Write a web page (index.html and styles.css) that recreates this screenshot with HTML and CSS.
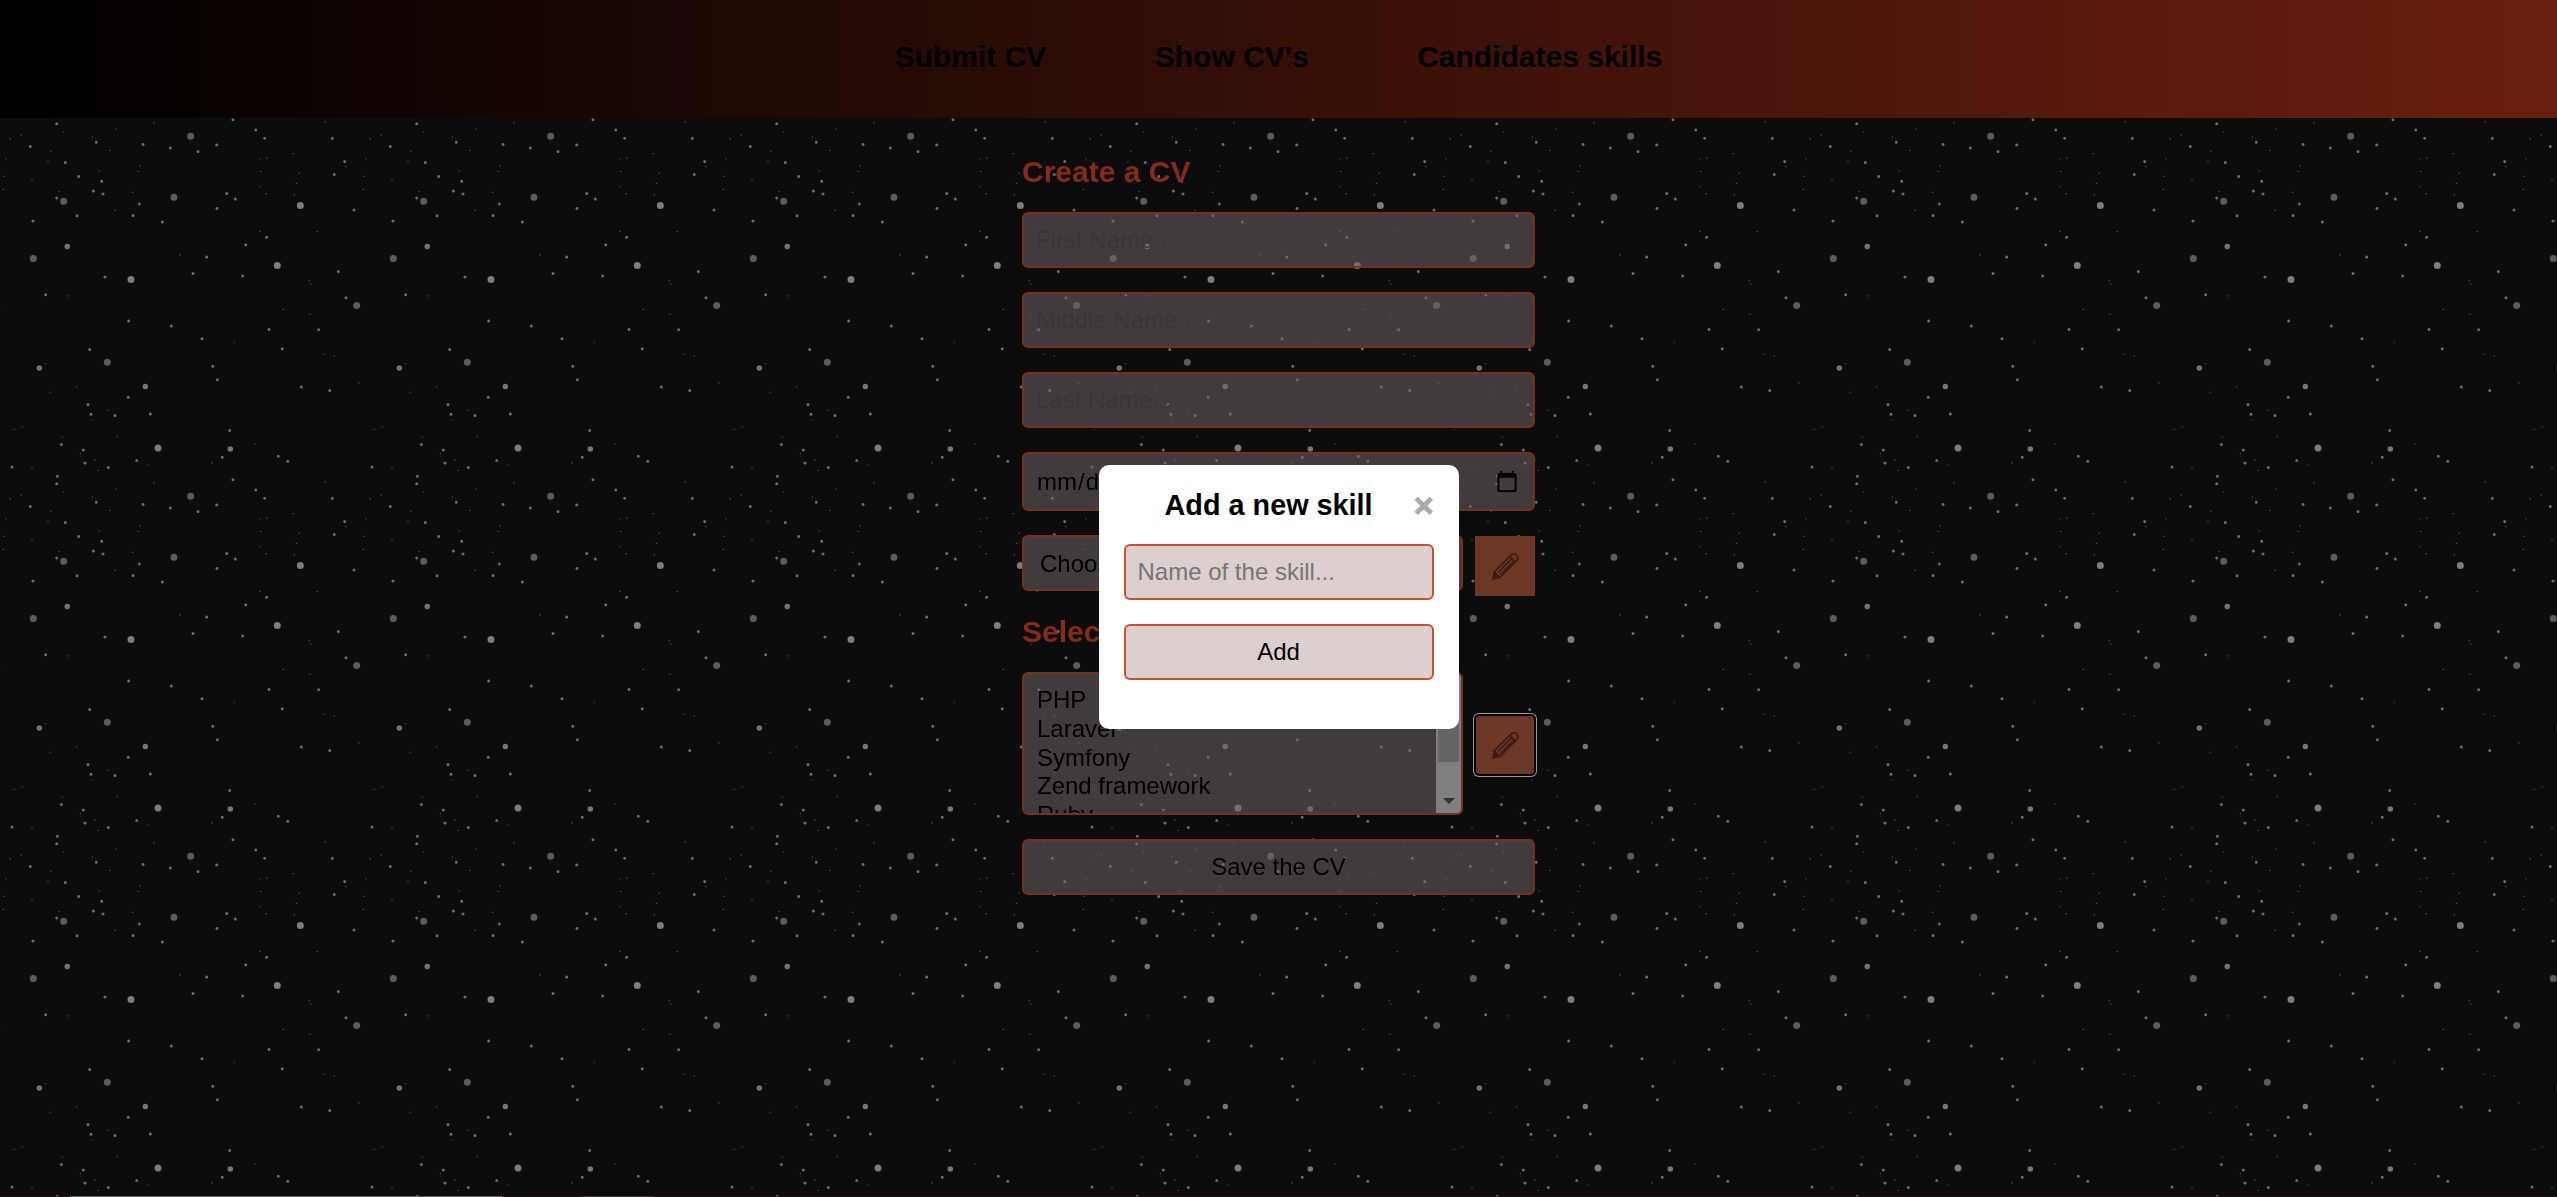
FILE: index.html
```html
<!DOCTYPE html>
<html lang="en">
<head>
  <meta charset="UTF-8">
  <meta name="viewport" content="width=device-width, initial-scale=1.0" />
  <title>Create a CV</title>
  <link rel="stylesheet" href="styles.css">
</head>
<body>
  <svg class="stars" aria-hidden="true">
    <defs>
      <pattern id="star-tile" patternUnits="userSpaceOnUse" x="0" y="118" width="360" height="360">
        <path class="star-big-dim" d="M190.7 18.2h0M63.7 83.2h0M174 79.3h0M33.3 140.4h0M107.3 244.3h0M356.7 187.5h0M-3.3 187.5h0"/>
        <path class="star-big" d="M300.3 87.5h0M277.3 147.5h0M131 161.4h0M158 330h0"/>
        <path class="star-large" d="M67.3 128.6h0M145.3 268.6h0M39.3 250h0M230.3 331h0"/>
        <path class="star-mid" d="M56.7 5.7h0M255.7 12.1h0M96.3 24.3h0M143 26.4h0M170.3 30h0M198 33.6h0M30.3 28.6h0M344.7 43.6h0M334.3 56.4h0M65.3 44.6h0M78.7 58.4h0M101.7 63.2h0M93.3 72.9h0M103 76h0M56.7 80h0M139.3 86h0M77 97.7h0M133 97.5h0M217 90.4h0M354 92h0M235.3 81h0M226.7 75.4h0M206.7 138.9h0M193 155.4h0M242.7 157.9h0M338.3 153.6h0M346 179.7h0M45.7 176.8h0M105 159h0M171.3 207.9h0M269 211.4h0M318.7 211.8h0M128.7 202.9h0M202 220.7h0M282.3 230.7h0M89.7 231.4h0M212.7 248.2h0M217.3 261.8h0M301.3 268.9h0M329.7 272.5h0M128.3 279.3h0M88 286.6h0M91 296.2h0M115 297.5h0M150.3 296h0M229.7 312.4h0M222.3 339.3h0M278.3 338.2h0M287.7 343.2h0M61.3 326.6h0M83.3 332.1h0M85 345h0M136.7 342.5h0M108.3 349.6h0M12 348.9h0M57.3 358.2h0M162.3 104.1h0M245.7 126.8h0M332.3 20.3h0M264.7 20.3h0M216.7 27.1h0M233 1.8h0M33 102.9h0M266.7 119.3h0"/>
        <path class="star-tiny" d="M154 5h0M116.3 10.9h0M325 3.9h0M10.3 21h0M21.3 17h0M63.3 13.6h0M92.3 18.9h0M6 41.1h0M51 33.2h0M48 43.9h0M109.7 32.5h0M99 52.9h0M4.3 58.2h0M32 61.8h0M3.3 71.4h0M59 73.6h0M140.3 48h0M138.3 53.4h0M132.7 74.3h0M115 92.4h0M260 41.1h0M267 39.9h0M293.3 35.7h0M260.7 53.4h0M299 55.2h0M296.3 65.4h0M260 68.6h0M266.3 75.7h0M294.3 76.8h0M346 48.9h0M260 113.2h0M317.3 113.6h0M179.7 137h0M309.3 163h0M311 166.1h0M68.7 177.9h0M283.3 191.4h0M310 196.4h0M234 224.6h0M323.7 236.1h0M334.3 238.2h0M45.7 245.7h0M76.7 268.9h0M50.3 274.1h0M358.7 265h0M108 291.9h0M92 302.1h0M22.3 308.9h0M14.3 311.4h0M62.3 318.9h0M117.3 318.6h0M255 326.1h0M80.3 335.7h0M95 342h0M211.7 345h0M148 347.1h0M32 349.9h0M98.3 352.4h0"/>
      </pattern>
    </defs>
    <rect width="100%" height="100%" fill="url(#star-tile)"/>
  </svg>

  <header class="topbar">
    <a href="#" class="nav-link">Submit CV</a>
    <a href="#" class="nav-link">Show CV's</a>
    <a href="#" class="nav-link">Candidates skills</a>
  </header>

  <main class="content">
    <form class="cv-form">
      <h2 class="form-title">Create a CV</h2>
      <input class="field" type="text" placeholder="First Name...">
      <input class="field" type="text" placeholder="Middle Name...">
      <input class="field" type="text" placeholder="Last Name...">
      <input class="field" type="date">

      <div class="row">
        <select class="field field-select">
          <option>Choose a city...</option>
        </select>
        <button type="button" class="icon-btn">
          <svg class="pencil" viewBox="0 0 27 27"><use href="#pencil-icon"/></svg>
        </button>
      </div>

      <h2 class="form-title form-title-skills">Select the skills</h2>
      <div class="row row-skills">
        <div class="skill-list">
          <div class="skill-options">
            <div class="skill-option">PHP</div>
            <div class="skill-option">Laravel</div>
            <div class="skill-option">Symfony</div>
            <div class="skill-option">Zend framework</div>
            <div class="skill-option">Ruby</div>
          </div>
          <div class="scrollbar">
            <div class="scroll-thumb"></div>
            <div class="scroll-arrow"></div>
          </div>
        </div>
        <button type="button" class="icon-btn icon-btn-focus">
          <svg class="pencil" viewBox="0 0 27 27">
            <g id="pencil-icon">
              <path class="pencil-line" d="M3 18.5 18.6 2.9c1.6-1.6 3.7-1.5 5.2 0s1.6 3.6 0 5.2L8.3 23.8 3 18.5z"/>
              <path class="pencil-line" d="M6.4 19.2 19.6 6M8.6 21.2 21.6 8.2M17.4 4.1l5.5 5.5"/>
              <path class="pencil-tip" d="M.8 26.2 2.6 18l6.1 6.2-7.9 2z"/>
            </g>
          </svg>
        </button>
      </div>

      <button type="button" class="field field-btn">Save the CV</button>
    </form>
  </main>

  <div class="page-edge">
    <span class="edge-a"></span>
    <span class="edge-b"></span>
    <span class="edge-c"></span>
  </div>

  <div class="overlay">
    <div class="modal">
      <div class="modal-head">
        <h3 class="modal-title">Add a new skill</h3>
        <span class="modal-close">&times;</span>
      </div>
      <input class="field modal-field" type="text" placeholder="Name of the skill...">
      <button type="button" class="field field-btn">Add</button>
    </div>
  </div>
</body>
</html>
```

FILE: styles.css
```css
* {
  box-sizing: border-box;
}

body {
  margin: 0;
  min-height: 100vh;
  display: flex;
  flex-direction: column;
  background: #141414;
  font-family: "Liberation Sans", Arial, sans-serif;
  color: #000;
}

/* star field, tile repeats every 360px */
.stars {
  position: fixed;
  top: 0;
  left: 0;
  width: 100%;
  height: 100%;
  z-index: -1;
}

.stars path {
  fill: none;
  stroke-linecap: round;
}

.star-big-dim { stroke: #9c9c9c; stroke-width: 7; }
.star-big { stroke: #d0d0d0; stroke-width: 7; }
.star-large { stroke: #c4c4c4; stroke-width: 5.5; }
.star-mid { stroke: #b4b4b4; stroke-width: 3; }
.star-tiny { stroke: #909090; stroke-width: 1.4; }

.topbar {
  height: 118px;
  display: flex;
  justify-content: center;
  align-items: center;
  gap: 108.5px;
  padding-bottom: 4px;
  background: linear-gradient(to right, #000, #b23419);
}

.nav-link {
  color: #000;
  font-size: 30px;
  font-weight: bold;
  text-decoration: none;
}

.content {
  flex: 1;
  display: flex;
  justify-content: center;
  padding-top: 37px;
}

.cv-form {
  width: 513px;
}

.form-title {
  margin: 0 0 23px;
  font-size: 30px;
  font-weight: bold;
  color: #dd4a2a;
}

.form-title-skills {
  margin-top: 19px;
}

.field {
  display: block;
  width: 100%;
  height: 56px;
  margin-bottom: 24px;
  padding: 12px;
  font-family: inherit;
  font-size: 24px;
  color: #000;
  background: rgba(188, 167, 167, 0.54);
  border: 2px solid #c9502f;
  border-radius: 6px;
}

.field::placeholder {
  color: #5c5c5c;
}

.modal-field::placeholder {
  color: #757575;
}

.field[type="date"] {
  height: 59px;
}

.field-btn {
  text-align: center;
  cursor: pointer;
}

.row {
  display: flex;
  align-items: flex-start;
  gap: 12px;
}

.row .field {
  margin-bottom: 0;
}

.field-select {
  flex: 1;
  width: auto;
  min-width: 0;
}

.icon-btn {
  flex: none;
  width: 60px;
  height: 60px;
  margin-top: 1px;
  padding: 0;
  display: flex;
  align-items: center;
  justify-content: center;
  background: #b55c40;
  border: none;
}

.icon-btn-focus {
  margin-top: 3px;
  border: 1px solid #000;
  border-radius: 4px;
  box-shadow: 0 0 0 1px #000, 0 0 0 2px #fff;
}

.pencil {
  width: 29px;
  height: 29px;
}

.pencil-line {
  fill: none;
  stroke: #66301f;
  stroke-width: 1.5;
}

.pencil-tip {
  fill: #66301f;
}

.row-skills {
  align-items: center;
  margin-bottom: 24px;
}

.skill-list {
  flex: 1;
  min-width: 0;
  height: 143px;
  display: flex;
  overflow: hidden;
  background: rgba(188, 167, 167, 0.54);
  border: 2px solid #c9502f;
  border-radius: 6px;
}

.skill-options {
  flex: 1;
  padding: 12px 12px 0;
}

.skill-option {
  height: 28.8px;
  padding: 0 1px;
  font-size: 24px;
  line-height: 28.8px;
}

.scrollbar {
  flex: none;
  width: 25px;
  display: flex;
  flex-direction: column;
  align-items: center;
  background: #d4d4d4;
}

.scroll-thumb {
  width: 21px;
  height: 64px;
  margin-top: 24px;
  background: #a8a8a8;
}

.scroll-arrow {
  margin-top: auto;
  margin-bottom: 9px;
  border-left: 6px solid transparent;
  border-right: 6px solid transparent;
  border-top: 6px solid #505050;
}

.page-edge {
  height: 1px;
  display: flex;
  background: #3c2018;
}

.edge-a {
  width: 432px;
  margin-left: 70px;
  background: #aaa;
}

.edge-b {
  width: 72px;
  margin-left: 80px;
  background: #6e5a54;
}

.overlay {
  position: fixed;
  top: 0;
  left: 0;
  width: 100%;
  height: 100%;
  display: flex;
  align-items: center;
  justify-content: center;
  padding-bottom: 3px;
  background: rgba(0, 0, 0, 0.4);
}

.modal {
  width: 360px;
  padding: 23px 25px 25px;
  background: #fff;
  border-radius: 10px;
}

.modal-head {
  display: flex;
  align-items: center;
  margin-bottom: 22px;
}

.modal-title {
  flex: 1;
  margin: 0;
  font-size: 28.8px;
  font-weight: bold;
  text-align: center;
}

.modal-close {
  color: #aaa;
  font-size: 34px;
  font-weight: bold;
  line-height: 1;
  -webkit-text-stroke: 1px #aaa;
}
```
